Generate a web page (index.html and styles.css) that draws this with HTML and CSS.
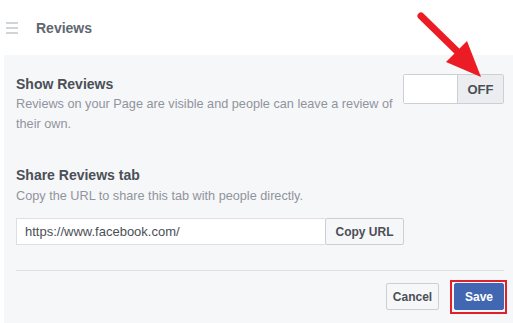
FILE: index.html
```html
<!DOCTYPE html>
<html lang="en">
<head>
  <meta charset="UTF-8">
  <title>Reviews</title>
  <link rel="stylesheet" href="styles.css">
</head>
<body>

<header class="topbar">
  <svg class="menu-icon" width="12" height="12" viewBox="0 0 12 12">
    <path d="M0 1h12M0 6h12M0 11h12" stroke="#c4c7cc" stroke-width="1.6"/>
  </svg>
  <h1>Reviews</h1>
</header>

<div class="panel">
  <div class="setting">
    <div class="info">
      <div class="title">Show Reviews</div>
      <div class="desc">Reviews on your Page are visible and people can leave a review of their own.</div>
    </div>
    <div class="toggle">
      <span class="toggle-on"></span>
      <span class="toggle-off">OFF</span>
    </div>
  </div>

  <div class="share">
    <div class="title">Share Reviews tab</div>
    <div class="desc">Copy the URL to share this tab with people directly.</div>
    <div class="url-row">
      <div class="url-input">https://www.facebook.com/</div>
      <a href="#" class="btn">Copy URL</a>
    </div>
  </div>

  <div class="divider"></div>

  <div class="actions">
    <a href="#" class="btn cancel">Cancel</a>
    <a href="#" class="btn save">Save</a>
  </div>
</div>

<!-- annotation overlay -->
<svg class="arrow" width="513" height="323" viewBox="0 0 513 323">
  <line x1="421" y1="16" x2="463" y2="57" stroke="#ec1c24" stroke-width="7" stroke-linecap="round"/>
  <polygon points="446,62 467,41 481,77" fill="#ec1c24"/>
</svg>

</body>
</html>
```

FILE: styles.css
```css
body { margin: 0; font-family: "Liberation Sans", Arial, sans-serif; background: #fff; color: #4b4f56; }
.topbar { height: 55px; display: flex; align-items: center; padding-left: 6px; }
.menu-icon { margin-top: 1px; }
.topbar h1 { font-size: 14px; font-weight: bold; margin: 0 0 0 18px; color: #606770; }

.panel {
  margin-left: 4px;
  background: #f6f7f9;
  padding: 21px 9px 0 12px;
  height: 268px;
  box-sizing: border-box;
}
.title { font-size: 14px; font-weight: bold; line-height: 16px; color: #4b4f56; }
.desc { font-size: 12.7px; line-height: 20px; color: #90949c; margin-top: 2px; }

.setting { display: flex; align-items: flex-start; }
.info { width: 380px; }
.toggle {
  margin-left: auto;
  margin-top: -2px;
  display: flex;
  width: 101px;
  height: 30px;
  border: 1px solid #ccd0d5;
  border-radius: 2px;
  box-sizing: border-box;
}
.toggle-on { width: 53px; background: #fff; border-right: 1px solid #ccd0d5; }
.toggle-off {
  flex: 1;
  background: #ebedf0;
  font-size: 13px;
  font-weight: bold;
  display: flex;
  align-items: center;
  justify-content: center;
}

.share { margin-top: 33px; }
.share .desc { margin-top: 3px; }
.url-row { display: flex; margin-top: 12px; }
.url-input {
  width: 309px;
  height: 27px;
  box-sizing: border-box;
  background: #fff;
  border: 1px solid #dddfe2;
  border-right: none;
  font-size: 13px;
  line-height: 25px;
  padding-left: 8px;
  color: #4b4f56;
}
.btn {
  display: inline-flex;
  align-items: center;
  justify-content: center;
  box-sizing: border-box;
  height: 27px;
  padding: 0 6px;
  border: 1px solid #ccd0d5;
  border-radius: 2px;
  background: #f6f7f9;
  color: #4b4f56;
  font-size: 12px;
  font-weight: bold;
  text-decoration: none;
  white-space: nowrap;
}
.url-row .btn { width: 79px; }

.divider { height: 1px; background: #dddfe2; margin-top: 25px; }

.actions { display: flex; justify-content: flex-end; margin-top: 12px; }
.cancel { width: 53px; }
.save {
  width: 50px;
  margin-left: 15px;
  background: #4267b2;
  border-color: #4267b2;
  color: #fff;
  position: relative;
}
.save::after {
  content: "";
  position: absolute;
  left: -5px;
  top: -4px;
  right: -4px;
  bottom: -5px;
  border: 2px solid #e0202a;
}

.arrow { position: absolute; left: 0; top: 0; pointer-events: none; }
```
